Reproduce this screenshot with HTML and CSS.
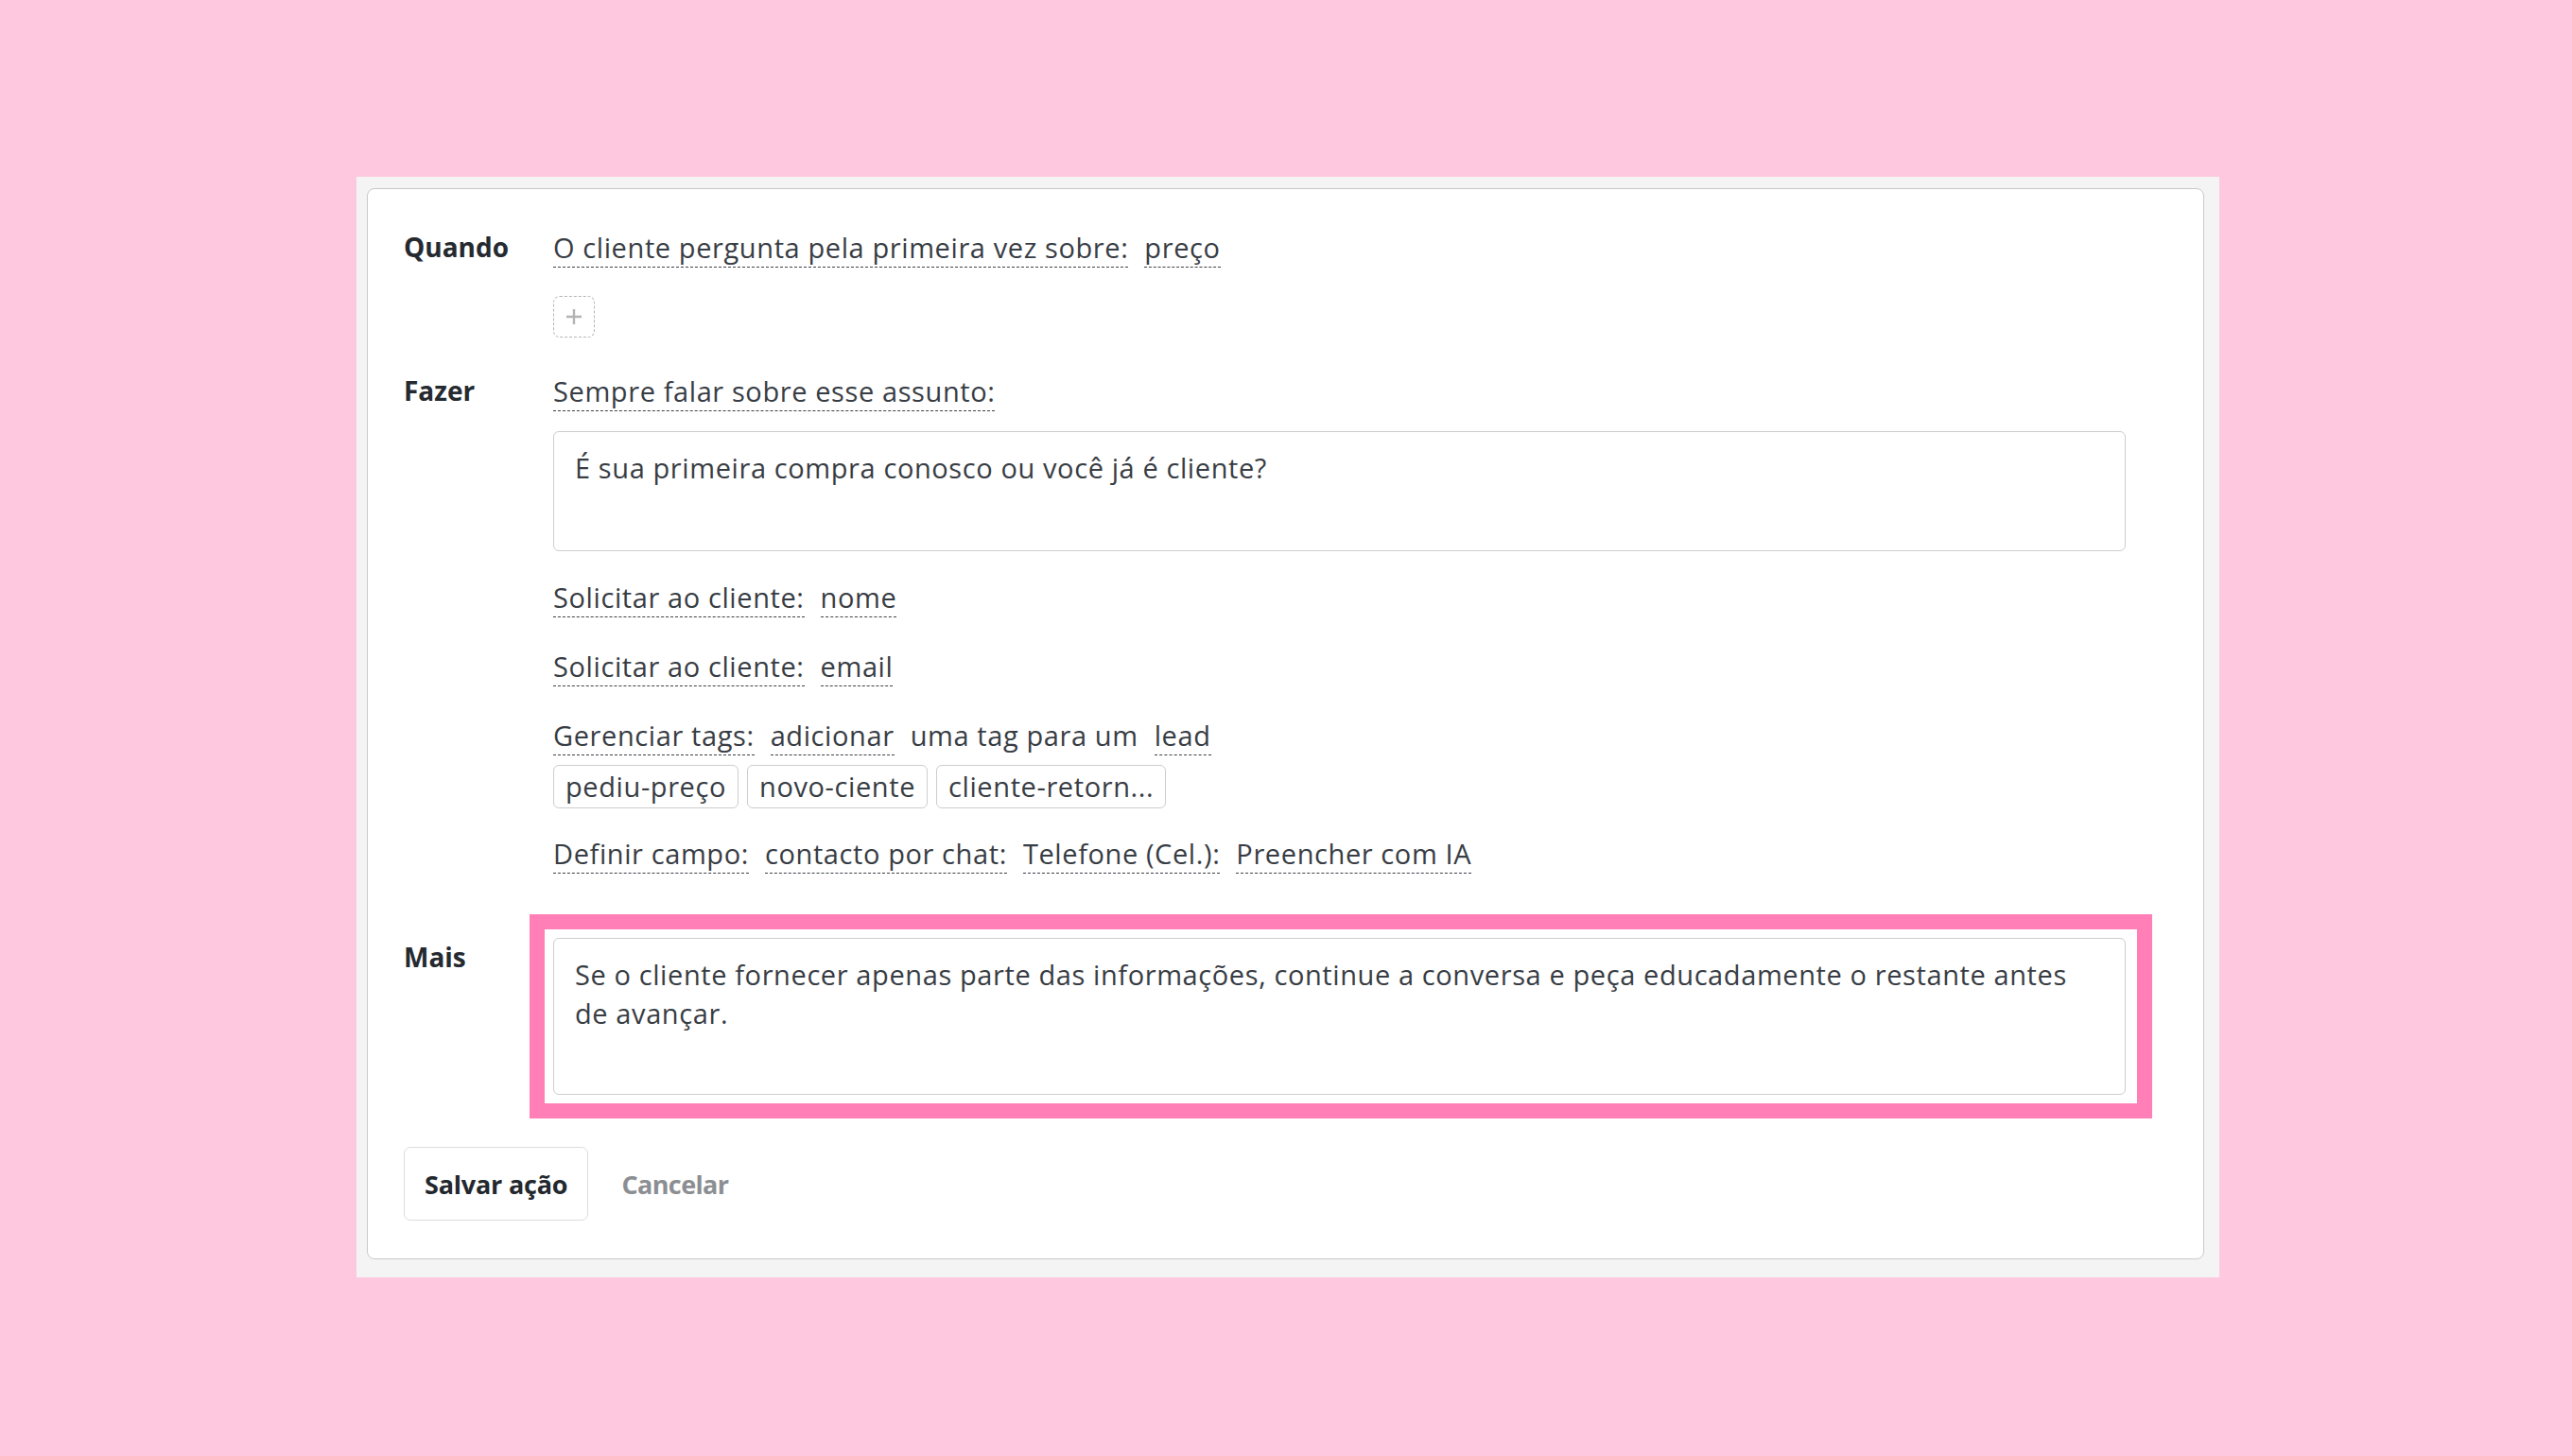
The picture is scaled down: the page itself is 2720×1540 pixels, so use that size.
FILE: index.html
```html
<!DOCTYPE html>
<html lang="pt">
<head>
<meta charset="utf-8">
<title>Ação</title>
<link rel="stylesheet" href="styles.css">
</head>
<body>
<div class="frame">
  <div class="card">
    <div class="section">
      <div class="label">Quando</div>
      <div class="content">
        <div class="line">
          <span class="u">O cliente pergunta pela primeira vez sobre:</span>
          <span class="u">preço</span>
        </div>
        <div class="add">
          <svg width="18" height="18" viewBox="0 0 18 18"><path d="M9 1v16M1 9h16" stroke="#b3b3b3" stroke-width="2.4" fill="none"/></svg>
        </div>
      </div>
    </div>

    <div class="section sec-fazer">
      <div class="label">Fazer</div>
      <div class="content">
        <div class="line">
          <span class="u">Sempre falar sobre esse assunto:</span>
        </div>
        <div class="field field-1">É sua primeira compra conosco ou você já é cliente?</div>
        <div class="line first-after-field">
          <span class="u">Solicitar ao cliente:</span>
          <span class="u">nome</span>
        </div>
        <div class="line step">
          <span class="u">Solicitar ao cliente:</span>
          <span class="u">email</span>
        </div>
        <div class="line step">
          <span class="u">Gerenciar tags:</span>
          <span class="u">adicionar</span>
          <span>uma tag para um</span>
          <span class="u">lead</span>
        </div>
        <div class="tags">
          <span class="tag">pediu-preço</span>
          <span class="tag">novo-ciente</span>
          <span class="tag">cliente-retorn...</span>
        </div>
        <div class="line after-tags">
          <span class="u">Definir campo:</span>
          <span class="u">contacto por chat:</span>
          <span class="u">Telefone (Cel.):</span>
          <span class="u">Preencher com IA</span>
        </div>
      </div>
    </div>

    <div class="section sec-mais">
      <div class="label">Mais</div>
      <div class="content">
        <div class="hl">
          <div class="field field-2">Se o cliente fornecer apenas parte das informações, continue a conversa e peça educadamente o restante antes de avançar.</div>
        </div>
      </div>
    </div>

    <div class="actions">
      <button class="btn" type="button">Salvar ação</button>
      <span class="cancel">Cancelar</span>
    </div>
  </div>
</div>
</body>
</html>
```

FILE: styles.css
```css
html, body {
  margin: 0;
  padding: 0;
}
body {
  background: #fec9df;
  font-family: "Open Sans", "Noto Sans", sans-serif;
  font-size: 28px;
  color: #383d44;
  width: 2720px;
  height: 1540px;
  overflow: hidden;
}
.frame {
  margin: 187px 0 0 377px;
  width: 1970px;
  box-sizing: border-box;
  background: #f4f4f4;
  padding: 12px 16px 19px 11px;
}
.card {
  background: #fff;
  border: 1px solid #c9c9c9;
  border-radius: 8px;
  padding: 41px 82px 40px 38px;
}
.section {
  display: flex;
}
.label {
  width: 158px;
  flex: none;
  font-weight: 700;
  line-height: 41px;
  color: #252a30;
}
.content {
  flex: 1;
  min-width: 0;
}
.line,
.field,
.tag {
  font-size: 29px;
  letter-spacing: 0.6px;
}
.line {
  display: flex;
  gap: 17px;
  line-height: 41px;
  white-space: nowrap;
}
.u {
  border-bottom: 1px dashed #3d4147;
}
.line > span:not(.u) {
  padding-bottom: 1px;
}
.add {
  margin-top: 30px;
  width: 44px;
  height: 44px;
  box-sizing: border-box;
  border: 1px dashed #b5b5b5;
  border-radius: 7px;
  display: flex;
  align-items: center;
  justify-content: center;
}
.add svg {
  display: block;
}
.sec-fazer {
  margin-top: 36px;
}
.field {
  border: 1px solid #cdcdcd;
  border-radius: 6px;
  padding: 17px 50px 17px 22px;
  line-height: 41px;
  box-sizing: border-box;
  background: #fff;
}
.field-1 {
  margin-top: 21px;
  height: 127px;
}
.field-2 {
  height: 166px;
}
.first-after-field {
  margin-top: 28px;
}
.step {
  margin-top: 31px;
}
.tags {
  display: flex;
  gap: 9px;
  margin-top: 10px;
}
.tag {
  height: 46px;
  box-sizing: border-box;
  border: 1px solid #cdcdcd;
  border-radius: 6px;
  padding: 0 12px;
  line-height: 43px;
  white-space: nowrap;
}
.after-tags {
  margin-top: 27px;
}
.sec-mais {
  margin-top: 68px;
}
.hl {
  position: relative;
}
.hl::after {
  content: "";
  position: absolute;
  top: -25px;
  left: -25px;
  right: -28px;
  bottom: -25px;
  border: 16px solid #ff7fb6;
  pointer-events: none;
}
.actions {
  margin-top: 55px;
  display: flex;
  align-items: center;
  font-size: 27px;
}
.btn {
  height: 78px;
  padding: 0 21px;
  border: 1px solid #dcdcdc;
  border-radius: 7px;
  background: #fff;
  font-family: "Open Sans", "Noto Sans", sans-serif;
  font-size: 27px;
  font-weight: 700;
  letter-spacing: -0.2px;
  color: #23282e;
}
.cancel {
  margin-left: 35px;
  font-weight: 700;
  letter-spacing: -0.6px;
  color: #8b8e92;
}
```
